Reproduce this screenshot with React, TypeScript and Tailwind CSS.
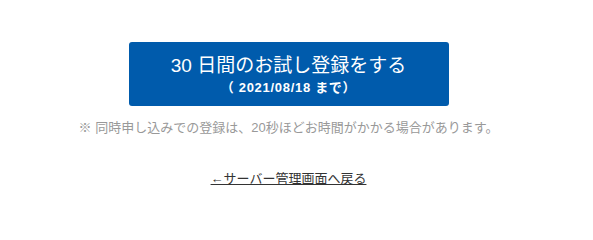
import React from "react";

export default function App() {
  return (
    <div
      className="w-[577px] bg-white h-[218px] flex flex-col items-center pt-[43px]"
      style={{ fontFamily: '"Liberation Sans", "Noto Sans CJK JP", sans-serif' }}
    >
      {/* Trial button */}
      <a
        href="#"
        className="-mt-px w-[320px] h-[64px] rounded-[3px] bg-[#005bac] text-white flex flex-col items-center justify-center"
      >
        <span className="text-[19px] leading-[24px] mt-[2px]">30 日間のお試し登録をする</span>
        <span className="text-[13px] leading-[18px] font-bold tracking-[0.7px] mt-[1px]">（ 2021/08/18 まで）</span>
      </a>

      <p className="mt-[13px] text-[13px] leading-[18px] text-[#999999]">
        ※ 同時申し込みでの登録は、20秒ほどお時間がかかる場合があります。
      </p>

      <a href="#" className="mt-[33px] text-[13px] leading-[18px] text-[#333333] underline">
        ←サーバー管理画面へ戻る
      </a>
    </div>
  );
}
